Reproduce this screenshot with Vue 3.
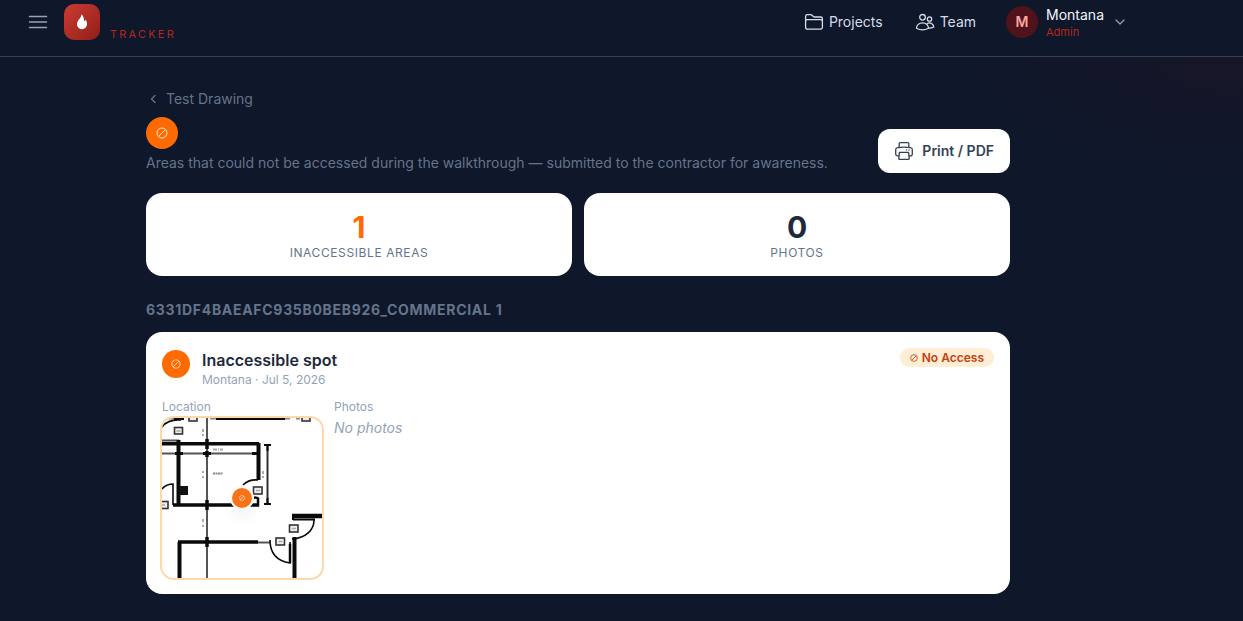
<script setup>
const stats = [
  { value: 1, label: 'Inaccessible areas', accent: true },
  { value: 0, label: 'Photos', accent: false },
]
</script>

<template>
  <div class="page">
    <header class="topbar">
      <button class="menu" type="button" aria-label="Open menu">
        <svg width="24" height="24" viewBox="0 0 24 24" fill="none" stroke="currentColor" stroke-width="1.5" stroke-linecap="round">
          <path d="M3.5 6.5h17M3.5 12h17M3.5 17.5h17" />
        </svg>
      </button>
      <a class="brand" href="#" aria-label="Tracker home">
        <span class="logo">
          <svg width="12" height="16" viewBox="0 0 12 16" fill="currentColor">
            <path d="M5.3.3C5.7 2.800 3.900 4.200 2.500 6 1.500 7.300 1 8.600 1 10c0 3 2.200 5.200 5 5.200S11 13 11 10c0-2-.6-3.500-1.500-4.600-.2 1-.7 1.500-1.400 1.700C8.200 4.300 7.300 1.900 5.300.3Z" />
          </svg>
        </span>
        <span class="wordmark">TRACKER</span>
      </a>
      <nav class="nav">
        <a class="nav-link" href="#">
          <svg width="20" height="20" viewBox="0 0 20 20" fill="none" stroke="currentColor" stroke-width="1.3" stroke-linejoin="round">
            <path d="M1.600 9V4.500c0-1 .8-1.800 1.800-1.800h3.400c.5 0 .9.2 1.200.5l1.300 1.300c.3.3.7.5 1.200.5h6.100c1 0 1.800.8 1.800 1.800V9" />
            <path d="M3.400 7.700h13.200c1 0 1.800.8 1.800 1.800v5.900c0 1-.8 1.800-1.800 1.800H3.400c-1 0-1.800-.8-1.800-1.800V9.500c0-1 .8-1.800 1.800-1.800Z" />
          </svg>
          Projects
        </a>
        <a class="nav-link" href="#">
          <svg width="20" height="20" viewBox="0 0 20 20" fill="none" stroke="currentColor" stroke-width="1.3" stroke-linecap="round" stroke-linejoin="round">
            <circle cx="7.500" cy="5.300" r="2.800" />
            <circle cx="14.500" cy="7" r="2.200" />
            <path d="M1.500 16.200a6 5.400 0 0 1 12 0 12 12 0 0 1-12 0Z" />
            <path d="M13.500 16.200a10 10 0 0 0 5.300-1.200 4.200 4.200 0 0 0-6.900-3" />
          </svg>
          Team
        </a>
        <button class="account" type="button">
          <span class="avatar">M</span>
          <span class="who">
            <span class="name">Montana</span>
            <span class="role">Admin</span>
          </span>
          <svg width="12" height="12" viewBox="0 0 12 12" fill="none" stroke="currentColor" stroke-width="1.2" stroke-linecap="round" stroke-linejoin="round">
            <path d="m2 4 4 4 4-4" />
          </svg>
        </button>
      </nav>
    </header>

    <main class="shell">
      <div class="content">
        <a class="back" href="#">
          <svg width="16" height="16" viewBox="0 0 16 16" fill="none" stroke="currentColor" stroke-width="1.300" stroke-linecap="round" stroke-linejoin="round">
            <path d="M9 4.500 5.500 8 9 11.500" />
          </svg>
          Test Drawing
        </a>

        <div class="intro">
          <div>
            <span class="dot large">
              <svg width="12" height="12" viewBox="0 0 12 12" fill="none" stroke="currentColor"><circle cx="6" cy="6" r="5" /><path d="m2.500 9.500 7-7" /></svg>
            </span>
            <p class="lead">Areas that could not be accessed during the walkthrough — submitted to the contractor for awareness.</p>
          </div>
          <button class="print" type="button">
            <svg width="20" height="20" viewBox="0 0 20 20" fill="none" stroke="currentColor" stroke-width="1.300" stroke-linecap="round" stroke-linejoin="round">
              <path d="M5.200 6V2.600c0-.5.4-.9.900-.9h7.800c.5 0 .9.4.9.900V6" />
              <path d="M4.900 14.800H3.700c-1.100 0-2-.8-2-1.900V8.600c0-1 .7-1.800 1.700-2a44 44 0 0 1 13.200 0c1 .2 1.700 1 1.700 2v4.300c0 1.100-.9 1.900-2 1.900h-1.200" />
              <path d="M5.400 11.300h9.200l.6 6.100c0 .5-.4.900-.9.900H5.700c-.5 0-.9-.4-.9-.9Z" />
              <path d="M12.500 8.900h.1M15 8.900h.1" />
            </svg>
            Print / PDF
          </button>
        </div>

        <section class="stats" aria-label="Summary">
          <div v-for="stat in stats" :key="stat.label" class="stat">
            <div class="value" :class="{ accent: stat.accent }">{{ stat.value }}</div>
            <div class="caption">{{ stat.label }}</div>
          </div>
        </section>

        <h2 class="group">6331DF4BAEAFC935B0BEB926_COMMERCIAL 1</h2>

        <article class="card">
          <div class="card-head">
            <span class="dot medium">
              <svg width="10" height="10" viewBox="0 0 12 12" fill="none" stroke="currentColor"><circle cx="6" cy="6" r="5" /><path d="m2.500 9.500 7-7" /></svg>
            </span>
            <div class="card-title">
              <h3>Inaccessible spot</h3>
              <p>Montana · Jul 5, 2026</p>
            </div>
            <span class="badge">
              <svg width="8" height="8" viewBox="0 0 12 12" fill="none" stroke="currentColor" stroke-width="1.200"><circle cx="6" cy="6" r="5" /><path d="m2.500 9.500 7-7" /></svg>
              No Access
            </span>
          </div>
          <div class="details">
            <div>
              <div class="label">Location</div>
              <div class="plan">
                <svg viewBox="0 0 160 160" fill="none" stroke="#0a0a0a">
                  <g stroke="#555" stroke-width="2">
                    <path d="M45 0V160M0 35.500H97M0 22.500H17M96 124.500H108" />
                    <path d="M0 .5H20M48 .5H54M122 .5H128M134 .5H138M156 1H160" stroke="#888" />
                  </g>
                  <path d="M54 .8H123M12 .8H22" stroke-width="2.500" />
                  <path d="M0 25.700H97M11 87H97M16 124H96" stroke-width="3.500" />
                  <path d="M16.500 22V87M96.500 25V62M17.500 124V160M132.500 119V160" stroke-width="4" />
                  <path d="M96 81V88M90 81q3-3 7 0" stroke-width="2.500" />
                  <path d="M130 98H160" stroke-width="4.500" />
                  <path d="M131 96V102M131 101.500H153" stroke-width="2" />
                  <rect x="17" y="68" width="9" height="9" fill="#111" stroke="none" />
                  <path d="M45 21V31M45 33V39M45 82V92M45 119V129" stroke-width="3.500" />
                  <path d="M13 35.500H21M90 35.500H97M41 35.500H49" stroke-width="3" />
                  <path d="M105.500 26V86" stroke="#333" stroke-width="2" />
                  <path d="M102 27H109M102 86H109M105.500 27V33M105.500 80V86" stroke-width="2" />
                  <g stroke-width="1.600">
                    <path d="M0 9Q6 1 19 2M0 71Q4 66 11 66V87M81 67Q87 61 96 62" />
                    <path d="M108 122C108 135 115 143 128 145V124M152 102C152 112 144 120 130 121" />
                  </g>
                  <path d="M128 145V126" stroke-width="2.500" />
                  <g stroke="#333" fill="#eee" stroke-width="1.600">
                    <rect x="12.500" y="9.500" width="8" height="6.500" />
                    <rect x="27" y="-3" width="8" height="6" />
                    <rect x="140" y="-3" width="8" height="6" />
                    <rect x="91.500" y="69" width="8.500" height="7" />
                    <rect x="-2" y="83.500" width="8" height="7" />
                    <rect x="127.500" y="107" width="8.500" height="7" />
                    <rect x="114" y="120" width="8.500" height="7" />
                  </g>
                  <g stroke="#aaa" stroke-width="1.500">
                    <path d="M14.500 13h4M94 72.500h4M130 110.500h4M116.500 123.500h4M0 87h3" />
                    <path d="M41 11v3M41 16v2M41 53v2M41 58v2M41 101v3M41 107v2M101 53v3M101 58v2" stroke-width="2" />
                    <path d="M51 31.500h4M56 31.500h1M58 31.500h3" stroke-width="2" />
                    <path d="M51 55.500h10" stroke="#888" stroke-width="2" stroke-dasharray="2 .5" />
                  </g>
                </svg>
                <span class="pin">
                  <svg width="6" height="6" viewBox="0 0 12 12" fill="none" stroke="currentColor" stroke-width="1.300"><circle cx="6" cy="6" r="5" /><path d="m2.500 9.500 7-7" /></svg>
                </span>
              </div>
            </div>
            <div>
              <div class="label">Photos</div>
              <p class="empty">No photos</p>
            </div>
          </div>
        </article>
      </div>
    </main>
  </div>
</template>

<style>
body {
  margin: 0;
  background: #0f172a;
}
</style>

<style scoped>
* {
  box-sizing: border-box;
}
.page {
  min-height: 100vh;
  font-family: Inter, "Liberation Sans", sans-serif;
  font-size: 14px;
  line-height: 20px;
  color: #1e293b;
  background: radial-gradient(ellipse 280px 130px at 100% 48px, #181628, #0f172a);
}
h2, h3, p {
  margin: 0;
}
a {
  color: inherit;
  text-decoration: none;
}
button {
  margin: 0;
  padding: 0;
  border: 0;
  background: none;
  font: inherit;
  color: inherit;
  cursor: pointer;
}
svg {
  display: block;
  flex: none;
}
.topbar {
  display: flex;
  align-items: center;
  padding: 0 117px 12px 26px;
  border-bottom: 1px solid #334155;
  background: #0f172a;
}
.menu {
  color: #94a3b8;
}
.brand {
  display: flex;
  align-items: center;
  gap: 10px;
  margin-left: 14px;
}
.logo {
  display: grid;
  place-items: center;
  width: 36px;
  height: 36px;
  border-radius: 10px;
  color: #fff;
  background: linear-gradient(135deg, #cc3b34, #8f1f18);
}
.wordmark {
  padding-top: 24px;
  font-size: 11px;
  letter-spacing: 0.2em;
  color: #b3261e;
}
.nav {
  display: flex;
  align-items: center;
  gap: 32px;
  height: 44px;
  margin-left: auto;
  color: #d5dde8;
}
.nav-link {
  display: flex;
  align-items: center;
  gap: 5px;
}
.account {
  display: flex;
  align-items: center;
  text-align: left;
  color: #94a3b8;
  margin-left: -2px;
}
.avatar {
  display: grid;
  place-items: center;
  width: 32px;
  height: 32px;
  margin-right: 8px;
  border-radius: 50%;
  font-weight: 600;
  color: #fca5a5;
  background: #50131b;
}
.who {
  display: grid;
  padding-top: 2px;
  margin-right: 10px;
}
.name {
  line-height: 18px;
  color: #f1f5f9;
}
.role {
  font-size: 11px;
  line-height: 16px;
  color: #b3261e;
}
.shell {
  padding: 32px 87px 27px 0;
}
.content {
  max-width: 896px;
  margin: 0 auto;
  padding: 0 16px;
}
.back {
  display: flex;
  align-items: center;
  gap: 4px;
  width: max-content;
  margin-bottom: 8px;
  color: #64748b;
}
.intro {
  display: flex;
  align-items: flex-end;
  justify-content: space-between;
  gap: 16px;
  margin-bottom: 20px;
}
.dot {
  display: grid;
  place-items: center;
  flex: none;
  border-radius: 50%;
  color: #ffe8d6;
  background: #ff6b00;
}
.large {
  width: 32px;
  height: 32px;
}
.medium {
  width: 28px;
  height: 28px;
  margin-top: 2px;
}
.lead {
  margin-top: 4px;
  color: #64748b;
}
.print {
  display: flex;
  align-items: center;
  gap: 8px;
  flex: none;
  padding: 12px 16px;
  border-radius: 12px;
  font-weight: 600;
  color: #334155;
  background: #fff;
}
.stats {
  display: grid;
  grid-template-columns: 1fr 1fr;
  gap: 12px;
  margin-bottom: 24px;
}
.stat {
  padding: 16px 16px 15px;
  border-radius: 16px;
  text-align: center;
  background: #fff;
}
.value {
  font-size: 30px;
  line-height: 36px;
  font-weight: 700;
}
.accent {
  color: #ff6b00;
}
.caption {
  font-size: 12px;
  line-height: 16px;
  letter-spacing: 0.05em;
  text-transform: uppercase;
  color: #64748b;
}
.group {
  margin-bottom: 12px;
  font-size: 14px;
  line-height: 20px;
  font-weight: 700;
  letter-spacing: 0.05em;
  color: #64748b;
}
.card {
  padding: 16px;
  border-radius: 16px;
  background: #fff;
}
.card-head {
  display: flex;
  align-items: flex-start;
  gap: 12px;
  margin-bottom: 12px;
}
.card-title {
  flex: 1;
}
.card-title h3 {
  font-size: 16px;
  line-height: 24px;
  font-weight: 600;
}
.card-title p {
  font-size: 12px;
  line-height: 16px;
  color: #94a3b8;
}
.badge {
  display: flex;
  align-items: center;
  gap: 4px;
  padding: 2px 10px;
  border-radius: 10px;
  font-size: 12px;
  line-height: 15px;
  font-weight: 600;
  color: #c2410c;
  background: #ffedd5;
}
.details {
  display: flex;
  gap: 12px;
}
.label {
  margin-bottom: 4px;
  font-size: 12px;
  line-height: 14px;
  color: #94a3b8;
}
.plan {
  position: relative;
  width: 160px;
  height: 160px;
  border-radius: 12px;
  box-shadow: 0 0 0 2px #fed7aa;
}
.plan > svg {
  width: 100%;
  height: 100%;
  border-radius: 12px;
}
.pin {
  position: absolute;
  top: 50%;
  left: 50%;
  display: grid;
  place-items: center;
  width: 24px;
  height: 24px;
  transform: translate(-50%, -50%);
  border: 2px solid #fff;
  border-radius: 50%;
  color: #ffe8d6;
  background: #f97316;
  box-shadow: 0 10px 12px rgba(0, 0, 0, 0.04);
}
.empty {
  font-style: italic;
  color: #94a3b8;
}
</style>
